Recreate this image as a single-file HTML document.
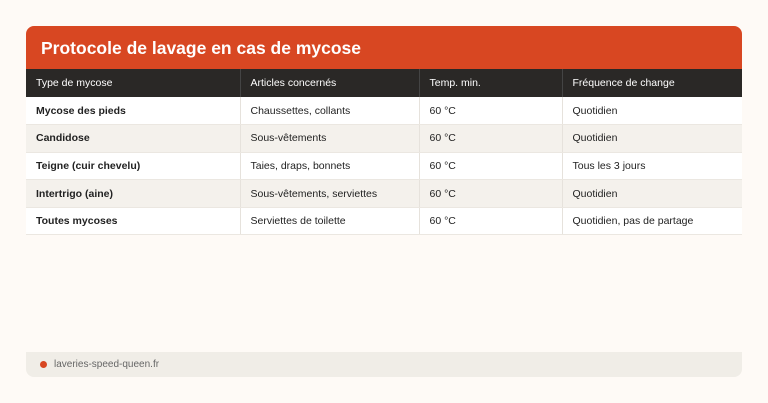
<!DOCTYPE html><html><head><style>
body{margin:0;width:768px;height:403px;background:#fefaf6;font-family:"Liberation Sans",sans-serif;position:relative;overflow:hidden}
.card{position:absolute;left:26px;top:26px;width:716px}
.title{background:#d84722;color:#fff;height:43px;border-radius:8px 8px 0 0;font-weight:bold;font-size:17.5px;line-height:44px;padding-left:15px;box-sizing:border-box}
table{border-collapse:collapse;width:716px;table-layout:fixed;font-size:10.5px}
td,th{padding:0 0 0 10px;text-align:left;border-right:1px solid #e6e2dc;color:#222}
tr.r{height:27.6px}
th{background:#2a2826;color:#fff;font-weight:normal;height:28px;border-right:1px solid #444}
tr td{border-bottom:1px solid #ebe7e1}
tr:nth-child(odd) td{background:#f4f1ec}
tr:nth-child(even) td{background:#fff}
td:first-child{font-weight:bold}
td:last-child,th:last-child{border-right:none}
.foot{position:absolute;left:26px;top:352px;width:716px;height:25px;background:#f0ede7;border-radius:0 0 8px 8px;font-size:10px;color:#666;line-height:26px}
.dot{position:absolute;left:14px;top:9px;width:7px;height:7px;border-radius:50%;background:#d84722}
</style></head><body>
<div class="card"><div class="title">Protocole de lavage en cas de mycose</div>
<table><colgroup><col style="width:214px"><col style="width:179px"><col style="width:143px"><col style="width:180px"></colgroup>
<tr><th>Type de mycose</th><th>Articles concernés</th><th>Temp. min.</th><th>Fréquence de change</th></tr>
<tr class="r"><td>Mycose des pieds</td><td>Chaussettes, collants</td><td>60 °C</td><td>Quotidien</td></tr>
<tr class="r"><td>Candidose</td><td>Sous-vêtements</td><td>60 °C</td><td>Quotidien</td></tr>
<tr class="r"><td>Teigne (cuir chevelu)</td><td>Taies, draps, bonnets</td><td>60 °C</td><td>Tous les 3 jours</td></tr>
<tr class="r"><td>Intertrigo (aine)</td><td>Sous-vêtements, serviettes</td><td>60 °C</td><td>Quotidien</td></tr>
<tr class="r"><td>Toutes mycoses</td><td>Serviettes de toilette</td><td>60 °C</td><td>Quotidien, pas de partage</td></tr>
</table></div>
<div class="foot"><span class="dot"></span><span style="margin-left:28px">laveries-speed-queen.fr</span></div>
</body></html>
